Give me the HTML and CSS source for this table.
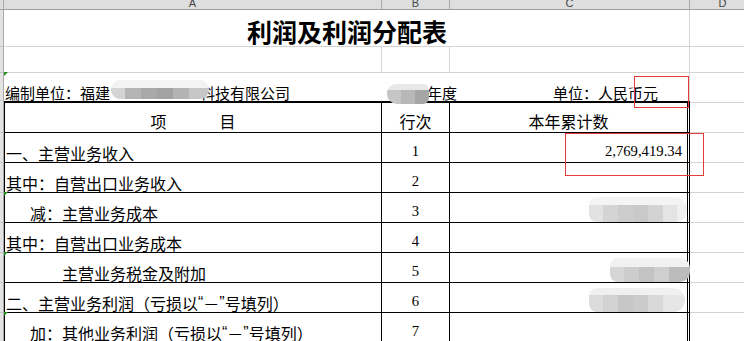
FILE: index.html
```html
<!DOCTYPE html>
<html lang="zh-CN">
<head>
<meta charset="utf-8">
<title>利润及利润分配表</title>
<link rel="stylesheet" href="styles.css">
</head>
<body>
<div class="sheet">
  <div class="row r-colhdr">
    <div class="c rh"></div>
    <div class="c ch"><span>A</span></div>
    <div class="c ch"><span>B</span></div>
    <div class="c ch"><span>C</span></div>
    <div class="c ch"><span>D</span></div>
  </div>
  <div class="row r-title">
    <div class="c rh"></div>
    <div class="c a title">利润及利润分配表</div>
    <div class="c d"></div>
  </div>
  <div class="row r-blank">
    <div class="c rh"></div>
    <div class="c a"></div>
    <div class="c b"></div>
    <div class="c cc"></div>
    <div class="c d"></div>
  </div>
  <div class="row r-unit">
    <div class="c rh"></div>
    <div class="c a flag meta">编制单位：福建<span class="hidden-name"></span>科技有限公司</div>
    <div class="c b meta year">年度</div>
    <div class="c cc meta unit">单位：人民币元</div>
    <div class="c d"></div>
  </div>
  <div class="row r-head t">
    <div class="c rh"></div>
    <div class="c a hd"><span>项</span><span>目</span></div>
    <div class="c b hd">行次</div>
    <div class="c cc hd">本年累计数</div>
    <div class="c d"></div>
  </div>
  <div class="row tr">
    <div class="c rh"></div>
    <div class="c a tx">一、主营业务收入</div>
    <div class="c b num">1</div>
    <div class="c cc num amt">2,769,419.34</div>
    <div class="c d"></div>
  </div>
  <div class="row tr">
    <div class="c rh"></div>
    <div class="c a tx">其中：自营出口业务收入</div>
    <div class="c b num">2</div>
    <div class="c cc num amt"></div>
    <div class="c d"></div>
  </div>
  <div class="row tr">
    <div class="c rh"></div>
    <div class="c a tx flag ind1">减：主营业务成本</div>
    <div class="c b num">3</div>
    <div class="c cc num amt"></div>
    <div class="c d"></div>
  </div>
  <div class="row tr">
    <div class="c rh"></div>
    <div class="c a tx">其中：自营出口业务成本</div>
    <div class="c b num">4</div>
    <div class="c cc num amt"></div>
    <div class="c d"></div>
  </div>
  <div class="row tr">
    <div class="c rh"></div>
    <div class="c a tx flag ind2">主营业务税金及附加</div>
    <div class="c b num">5</div>
    <div class="c cc num amt"></div>
    <div class="c d"></div>
  </div>
  <div class="row tr">
    <div class="c rh"></div>
    <div class="c a tx">二、主营业务利润（亏损以<span class="q">“</span>－<span class="q">”</span>号填列）</div>
    <div class="c b num">6</div>
    <div class="c cc num amt"></div>
    <div class="c d"></div>
  </div>
  <div class="row tr">
    <div class="c rh"></div>
    <div class="c a tx flag ind1">加：其他业务利润（亏损以<span class="q">“</span>－<span class="q">”</span>号填列）</div>
    <div class="c b num">7</div>
    <div class="c cc num amt"></div>
    <div class="c d"></div>
  </div>

  <div class="blob blob-co"></div>
  <div class="blob blob-yr"></div>
  <div class="blob blob-n3"></div>
  <div class="blob blob-n5"></div>
  <div class="blob blob-n6"></div>

  <div class="redbox rb1"></div>
  <div class="redbox rb2"></div>
</div>
</body>
</html>
```
FILE: styles.css
```css
* { box-sizing: border-box; margin: 0; padding: 0; }
html, body { background: #fff; }
body {
  margin: 0;
  width: 744px;
  height: 341px;
  overflow: hidden;
  font-family: "Noto Sans CJK SC", "Noto Sans", sans-serif;
  color: #000;
  text-spacing-trim: space-all;
}
.sheet { position: relative; width: 756px; }
.row {
  display: grid;
  grid-template-columns: 4px 378px 68px 240px 66px;
}
.c {
  display: flex;
  align-items: flex-end;
  white-space: nowrap;
  min-width: 0;
  border-right: 1px solid #d4d4d4;
  border-bottom: 1px solid #d4d4d4;
}
.a { border-left: 1px solid transparent; }
.d { border-right: 0; }
.rh {
  background: #e3e3e3;
  border-right-color: #a9a9a9;
  border-bottom-color: #c4c4c4;
}

/* column header */
.r-colhdr { height: 10px; }
.r-colhdr .c {
  background: #dedede;
  border-bottom-color: #9f9f9f;
  border-right-color: #ababab;
  justify-content: center;
  align-items: flex-start;
  overflow: hidden;
  font: 11px "Liberation Sans", Arial, sans-serif;
  color: #444;
}
.r-colhdr .rh { background: #dedede; }
.r-colhdr span { display: block; line-height: 6px; }
.r-colhdr .d { border-right: 0; }

/* title row */
.r-title { height: 37px; }
.title {
  grid-column: 2 / 5;
  justify-content: center;
  font-size: 25px;
  font-weight: 700;
  line-height: 25px;
  padding-bottom: 2px;
}

.r-blank { height: 26px; }

/* unit row */
.r-unit { height: 28px; }
.r-unit .a, .r-unit .b { border-right-color: transparent; border-bottom: 0; }
.r-unit .cc { border-bottom: 0; }
.r-unit .d { border-bottom: 0; }
.meta { font-size: 15px; line-height: 15px; padding-bottom: 1px; }
.hidden-name { display: inline-block; width: 90px; }
.year { padding-left: 45px; }
.unit { padding-left: 103px; }

/* header row */
.r-head { height: 32px; }
.t .a, .t .b, .t .cc {
  border-top: 2px solid #000;
  border-bottom: 1px solid #000;
  border-right-color: #000;
}
.t .a { border-left-color: #000; }
.t .cc { border-right: 3px double #000; }
.t .d { border-top: 1px solid #fff; box-shadow: inset 0 1px 0 #d4d4d4; }
.hd {
  justify-content: center;
  font-size: 16px;
  line-height: 16px;
  padding-bottom: 3px;
}
.r-head .a.hd { gap: 53px; }

/* table rows */
.tr { height: 30px; }
.tr .a { border-left-color: #000; }
.tr .a, .tr .b { border-right-color: #000; border-bottom-color: #000; }
.tr .cc { border-right: 3px double #000; border-bottom-color: #000; }
.tx { font-size: 16px; line-height: 16px; padding: 0 0 1px 1px; }
.q { font-family: "Liberation Sans", Arial, sans-serif; }
.ind1 { padding-left: 25px; }
.ind2 { padding-left: 57px; }
.num {
  font-family: "Liberation Serif", "Times New Roman", serif;
  font-size: 14.7px;
  line-height: 16px;
  padding-bottom: 3px;
}
.b.num { justify-content: center; }
.amt { justify-content: flex-end; padding-right: 5px; }

/* green error-indicator triangles */
.flag { position: relative; }
.flag::before {
  content: "";
  position: absolute;
  left: -1px;
  top: -1px;
  border-top: 4px solid #1f8a24;
  border-right: 4px solid transparent;
}

/* redaction blobs */
.blob { position: absolute; filter: blur(0.7px); }
.blob-co {
  left: 111px; top: 80px; width: 98px; height: 19px;
  border-radius: 9px;
  background:
    linear-gradient(180deg, #f3f3f3 0 42%, transparent 42%),
    linear-gradient(90deg, #d4d4d4 0 14px, #b4b4b4 14px 30px, #a9a9a9 30px 46px, #a2a2a2 46px 62px, #b3b3b3 62px 78px, #c6c6c6 78px);
}
.blob-yr {
  left: 387px; top: 84px; width: 42px; height: 20px;
  border-radius: 9px 6px 6px 10px;
  background:
    linear-gradient(180deg, #e8e8e8 0 30%, transparent 30%),
    linear-gradient(90deg, #c6c6c6 0 14px, #b8b8b8 14px 28px, #a6a6a6 28px);
}
.blob-n3 {
  left: 589px; top: 197px; width: 98px; height: 25px;
  border-radius: 8px 12px 12px 8px;
  background:
    linear-gradient(180deg, #f4f4f4 0 32%, transparent 32%),
    linear-gradient(90deg, #e2e2e2 0 14px, #d4d4d4 14px 29px, #cdcdcd 29px 44px, #c9c9c9 44px 59px, #d3d3d3 59px 74px, #e4e4e4 74px 88px, #efefef 88px);
}
.blob-n5 {
  left: 610px; top: 258px; width: 80px; height: 24px;
  border-radius: 8px 10px 10px 8px;
  background:
    linear-gradient(180deg, #f1f1f1 0 38%, transparent 38%),
    linear-gradient(90deg, #d6d6d6 0 14px, #cdcdcd 14px 29px, #c3c3c3 29px 44px, #cfcfcf 44px 59px, #bcbcbc 59px);
}
.blob-n6 {
  left: 589px; top: 288px; width: 96px; height: 24px;
  border-radius: 8px 12px 12px 8px;
  background:
    linear-gradient(180deg, #f0f0f0 0 30%, transparent 30%),
    linear-gradient(90deg, #dcdcdc 0 14px, #d2d2d2 14px 29px, #c7c7c7 29px 44px, #cbcbcb 44px 59px, #d8d8d8 59px 74px, #e6e6e6 74px);
}

/* red annotation boxes */
.redbox { position: absolute; border: 1px solid #e53b3b; }
.rb1 { left: 634px; top: 76px; width: 55px; height: 32px; }
.rb2 { left: 565px; top: 133px; width: 139px; height: 43px; }
```
